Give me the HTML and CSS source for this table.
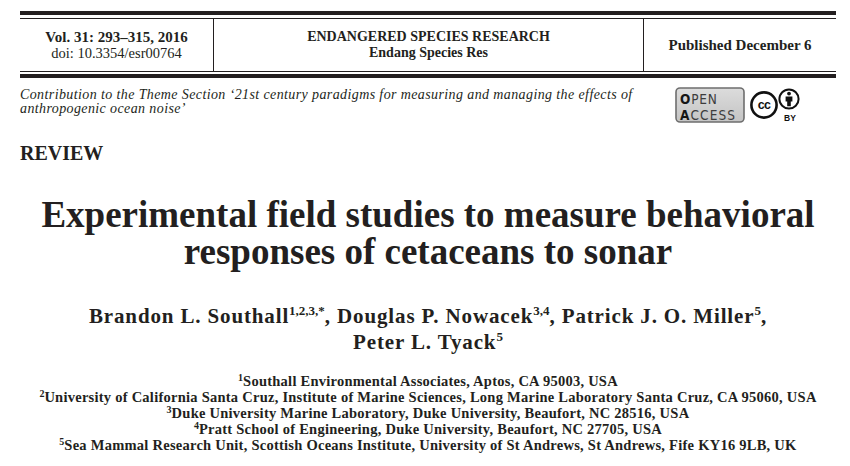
FILE: index.html
```html
<!DOCTYPE html>
<html lang="en">
<head>
<meta charset="utf-8">
<title>Experimental field studies to measure behavioral responses of cetaceans to sonar</title>
<link rel="stylesheet" href="styles.css">
</head>
<body>
<header class="masthead">
  <div class="masthead-inner">
    <div class="mh-col mh-vol">
      <div class="vol">Vol. 31: 293–315, 2016</div>
      <div class="doi">doi: 10.3354/esr00764</div>
    </div>
    <div class="mh-col mh-journal">
      <div class="journal">ENDANGERED SPECIES RESEARCH</div>
      <div class="journal">Endang Species Res</div>
    </div>
    <div class="mh-col mh-pub">
      <div class="pub">Published December 6</div>
    </div>
  </div>
</header>

<div class="theme-row">
  <p class="theme">Contribution to the Theme Section ‘21st century paradigms for measuring and managing the effects of anthropogenic ocean noise’</p>
  <div class="logos">
    <svg class="oa" width="70" height="36" viewBox="0 0 70 36">
      <defs>
        <linearGradient id="oag" x1="0" y1="0" x2="0" y2="1">
          <stop offset="0" stop-color="#dcdcdc"/>
          <stop offset="1" stop-color="#c4c4c4"/>
        </linearGradient>
      </defs>
      <rect x="1" y="1" width="68" height="34" rx="4" ry="4" fill="url(#oag)" stroke="#6e6e6e" stroke-width="1.6"/>
      <text x="5" y="17" class="oa-text"><tspan class="oa-dark">O</tspan><tspan class="oa-mid">PEN</tspan></text>
      <text x="5" y="32.5" class="oa-text oa-wide"><tspan class="oa-dark">A</tspan><tspan class="oa-mid">CCESS</tspan></text>
    </svg>
    <svg class="ccby" width="58" height="36" viewBox="0 0 58 36">
      <circle cx="16" cy="18" r="12.6" fill="#fff" stroke="#111" stroke-width="2.6"/>
      <text x="16" y="22.2" class="cc-text" text-anchor="middle">cc</text>
      <circle cx="41" cy="12" r="9.6" fill="#fff" stroke="#111" stroke-width="2"/>
      <circle cx="41" cy="6.6" r="1.9" fill="#111"/>
      <path d="M37.6 9.4 h6.8 v5.2 h-1.6 v4.6 h-3.6 v-4.6 h-1.6 z" fill="#111"/>
      <text x="42" y="33.5" class="by-text" text-anchor="middle">BY</text>
    </svg>
  </div>
</div>

<div class="section-label">REVIEW</div>

<h1 class="title">Experimental field studies to measure behavioral responses of cetaceans to sonar</h1>

<p class="authors">Brandon L. Southall<sup>1,2,3,*</sup>, Douglas P. Nowacek<sup>3,4</sup>, Patrick J. O. Miller<sup>5</sup>,<br>Peter L. Tyack<sup>5</sup></p>

<div class="affils">
  <div><sup>1</sup>Southall Environmental Associates, Aptos, CA 95003, USA</div>
  <div><sup>2</sup>University of California Santa Cruz, Institute of Marine Sciences, Long Marine Laboratory Santa Cruz, CA 95060, USA</div>
  <div><sup>3</sup>Duke University Marine Laboratory, Duke University, Beaufort, NC 28516, USA</div>
  <div><sup>4</sup>Pratt School of Engineering, Duke University, Beaufort, NC 27705, USA</div>
  <div><sup>5</sup>Sea Mammal Research Unit, Scottish Oceans Institute, University of St Andrews, St Andrews, Fife KY16 9LB, UK</div>
</div>
</body>
</html>
```

FILE: styles.css
```css
html, body {
  background: #fff;
}
body {
  margin: 0;
  padding: 11px 14px 0 20px;
  font-family: "Liberation Serif", "Times New Roman", serif;
  color: #231f20;
  width: 816px;
}

/* masthead */
.masthead {
  border-top: 4px solid #231f20;
  border-bottom: 4px solid #231f20;
  padding: 3px 0 2px;
}
.masthead-inner {
  border-top: 1px solid #231f20;
  border-bottom: 1px solid #231f20;
  display: grid;
  grid-template-columns: 193px 430px 1fr;
  height: 52px;
}
.mh-col {
  display: flex;
  flex-direction: column;
  justify-content: center;
  align-items: center;
  text-align: center;
}
.mh-journal, .mh-pub {
  border-left: 1px solid #231f20;
}
.vol {
  font-weight: bold;
  font-size: 15px;
  line-height: 16px;
}
.doi {
  font-size: 14.5px;
  line-height: 16px;
}
.journal {
  font-weight: bold;
  font-size: 14px;
  line-height: 16px;
}
.pub {
  font-weight: bold;
  font-size: 15px;
  line-height: 16px;
}

/* theme row */
.theme-row {
  display: flex;
  justify-content: space-between;
  align-items: flex-start;
  margin-top: 10px;
}
.theme {
  margin: 0;
  width: 630px;
  font-style: italic;
  font-size: 14px;
  line-height: 14px;
  letter-spacing: 0.39px;
}
.logos {
  display: flex;
  align-items: flex-start;
  margin-top: -1px;
  margin-right: 30px;
  gap: 3px;
}
.logos svg {
  display: block;
}
.oa-text {
  font-family: "DejaVu Sans Condensed", "Liberation Sans Narrow", "Liberation Sans", sans-serif;
  font-size: 13.5px;
  letter-spacing: 0.8px;
}
.oa-wide {
  letter-spacing: 1.1px;
}
.oa-dark {
  fill: #151515;
  font-weight: bold;
}
.oa-mid {
  fill: #3d3d3d;
}
.cc-text {
  font-family: "Liberation Sans", Arial, sans-serif;
  font-weight: bold;
  font-size: 12.5px;
  letter-spacing: -0.6px;
  fill: #111;
}
.by-text {
  font-family: "Liberation Sans", Arial, sans-serif;
  font-weight: bold;
  font-size: 8.5px;
  fill: #111;
}

/* section label */
.section-label {
  margin-top: 18px;
  font-weight: bold;
  font-size: 20px;
  line-height: 24px;
}

/* title */
.title {
  margin: 31px 0 0;
  text-align: center;
  font-weight: bold;
  font-size: 37px;
  line-height: 37px;
}

/* authors */
.authors {
  margin: 33px 0 0;
  text-align: center;
  font-weight: bold;
  font-size: 21px;
  line-height: 26px;
  letter-spacing: 0.86px;
}
.authors sup {
  font-size: 13px;
  line-height: 0;
  letter-spacing: 0;
  vertical-align: 8px;
}

/* affiliations */
.affils {
  margin-top: 18px;
  text-align: center;
  font-weight: bold;
  font-size: 14.5px;
  line-height: 16px;
  letter-spacing: 0.25px;
}
.affils sup {
  font-size: 10px;
  line-height: 0;
  letter-spacing: 0;
  vertical-align: 5px;
}
```
